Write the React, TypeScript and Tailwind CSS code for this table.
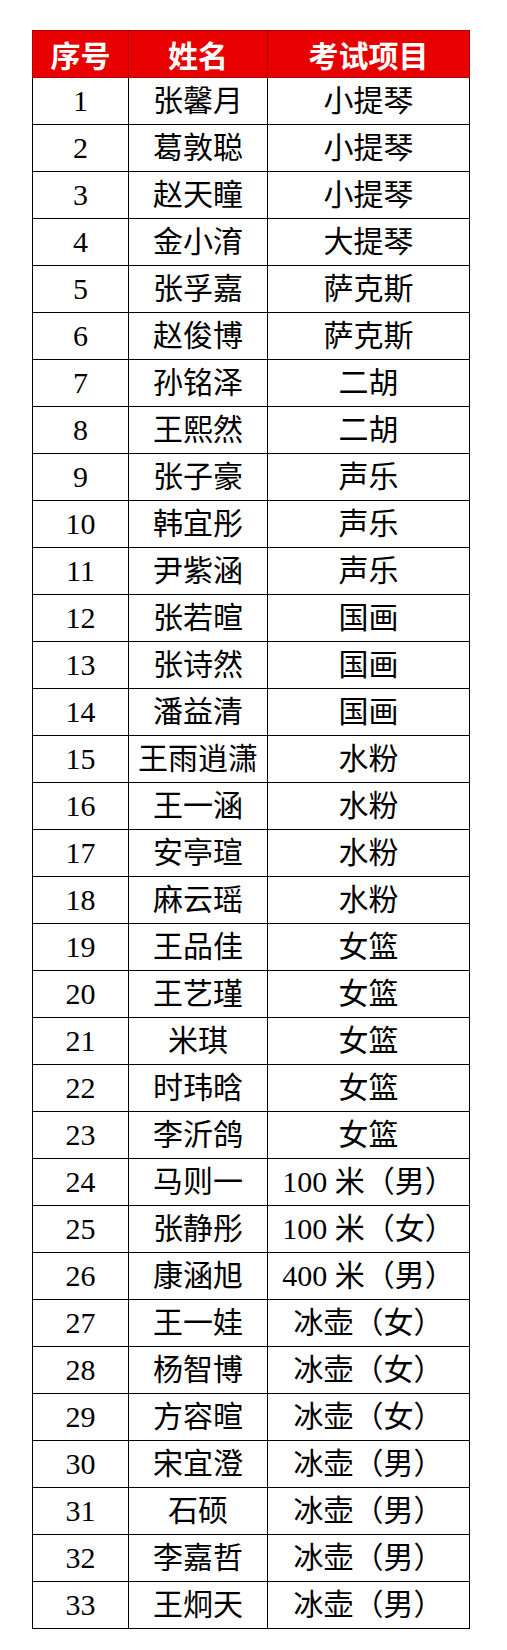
const rows: [string, string][] = [
  ["张馨月", "小提琴"],
  ["葛敦聪", "小提琴"],
  ["赵天瞳", "小提琴"],
  ["金小淯", "大提琴"],
  ["张孚嘉", "萨克斯"],
  ["赵俊博", "萨克斯"],
  ["孙铭泽", "二胡"],
  ["王熙然", "二胡"],
  ["张子豪", "声乐"],
  ["韩宜彤", "声乐"],
  ["尹紫涵", "声乐"],
  ["张若暄", "国画"],
  ["张诗然", "国画"],
  ["潘益清", "国画"],
  ["王雨逍潇", "水粉"],
  ["王一涵", "水粉"],
  ["安亭瑄", "水粉"],
  ["麻云瑶", "水粉"],
  ["王品佳", "女篮"],
  ["王艺瑾", "女篮"],
  ["米琪", "女篮"],
  ["时玮晗", "女篮"],
  ["李沂鸽", "女篮"],
  ["马则一", "100 米（男）"],
  ["张静彤", "100 米（女）"],
  ["康涵旭", "400 米（男）"],
  ["王一娃", "冰壶（女）"],
  ["杨智博", "冰壶（女）"],
  ["方容暄", "冰壶（女）"],
  ["宋宜澄", "冰壶（男）"],
  ["石硕", "冰壶（男）"],
  ["李嘉哲", "冰壶（男）"],
  ["王炯天", "冰壶（男）"],
];

export default function App() {
  return (
    <div className="min-h-[1650px] bg-white pl-[32px] pt-[30px]">
      <table className="border-collapse text-center text-[30px] leading-none text-black [font-family:'Liberation_Serif','Noto_Sans_CJK_SC',serif]">
        <thead>
          <tr className="h-[47px] bg-[#e80000] text-white">
            <th className="w-[96px] border border-[#b00000] font-bold [font-family:'Noto_Sans_CJK_SC',sans-serif]">序号</th>
            <th className="w-[139px] border border-[#b00000] font-bold [font-family:'Noto_Sans_CJK_SC',sans-serif]">姓名</th>
            <th className="w-[202px] border border-[#b00000] font-bold [font-family:'Noto_Sans_CJK_SC',sans-serif]">考试项目</th>
          </tr>
        </thead>
        <tbody>
          {rows.map(([name, item], i) => (
            <tr key={i} className="h-[47px]">
              <td className="border border-black">{i + 1}</td>
              <td className="border border-black">{name}</td>
              <td className="border border-black">{item}</td>
            </tr>
          ))}
        </tbody>
      </table>
    </div>
  );
}
